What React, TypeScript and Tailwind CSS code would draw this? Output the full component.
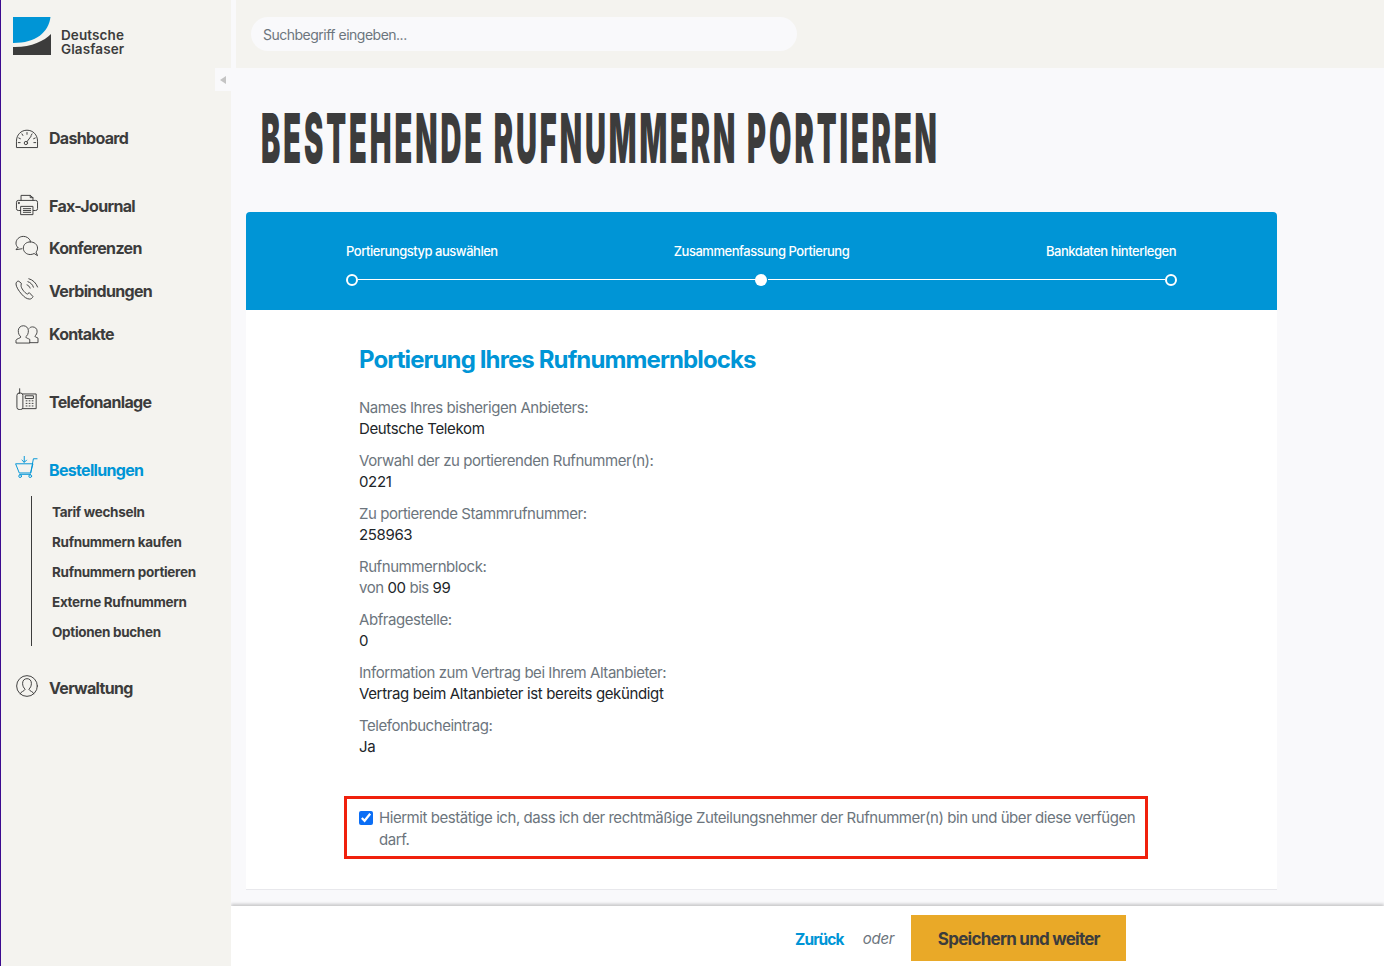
import React from "react";

const S = ({ children, c = "#3c3c3c" }: { children: React.ReactNode; c?: string }) => (
  <svg width="24" height="22" viewBox="0 0 26 24" fill="none" stroke={c} strokeWidth="1.050" strokeLinecap="round" strokeLinejoin="round">
    {children}
  </svg>
);

const Gauge = () => (
  <S>
    <path d="M1.500 22v-6.500C1.500 8.500 6.500 3.500 13 3.500s11.500 5 11.500 12V22z" />
    <path d="M13 6v2M7.500 7.500l1 1.700M18.500 7.500l-1 1.700M4 12l1.800.8M22 12l-1.800.8M3.500 17h2M20.500 17h2" />
    <circle cx="11.800" cy="17.500" r="1.800" />
    <path d="M13 16l4.500-6" />
  </S>
);
const Printer = () => (
  <S>
    <path d="M6.500 7V1.500h10l3 2.500v3" />
    <path d="M16.500 1.500V4h3" />
    <path d="M6 18H3.500a2 2 0 0 1-2-2V9a2 2 0 0 1 2-2h19a2 2 0 0 1 2 2v7a2 2 0 0 1-2 2H20" />
    <rect x="6.500" y="13.500" width="13" height="9" />
    <path d="M9 16h8M9 18h8M9 20h8" />
    <circle cx="4" cy="9.800" r=".6" fill="#3c3c3c" />
  </S>
);
const Chat = () => (
  <S>
    <path d="M3 13.500c-1.300-1.200-2-2.800-2-4.600C1 5 4.500 1.500 9 1.500c3.500 0 6.500 2 7.800 5" />
    <path d="M3 13.500L1 16l6.500-1" />
    <path d="M16.500 7.500c4.500 0 8 2.900 8 6.800 0 1.700-.6 3.200-1.700 4.300l1.700 3.900-3.700-2.300c-1.300.7-2.800 1.100-4.300 1.100-4.200 0-7.500-3-7.500-7 0-4 3.300-6.800 7.500-6.800z" />
  </S>
);
const PhoneWaves = () => (
  <S>
    <path d="M6.500 5.500L4 3.500C2.500 3 1 4.800 1 6.500c0 3 3 7.500 6 11s6 5.500 9 5.500c1.500 0 3-1.200 3.500-2.800l-4-4.200-2 1.500c-1.700-.5-3.300-2.200-4.800-4.200-1.300-1.800-2.300-3.500-2.200-5z" />
    <path d="M13 7.500c1.600.6 2.800 1.800 3.400 3.500M14 4c3 1 5 3 6 6M15 .8c4.500 1.200 8 4.700 9.500 9" />
  </S>
);
const Users = () => (
  <S>
    <g transform="translate(0,1.200) scale(1,0.9)">
      <path d="M1 22.500v-3c0-1.500 5-2.500 5.500-4-2-1.500-3-4-3-7.500 0-3.500 2.500-6 5.500-6s5.500 2.500 5.500 6c0 3.500-1 6-3 7.500.5 1.500 3 2 4.500 3v4z" />
      <path d="M15.500 5c.7-1 2-1.600 3.500-1.600 2.800 0 5 2.100 5 5.100 0 2.700-.8 4.700-2.500 6 .4 1.300 2 1.500 3.500 2.500v5.500h-9" />
    </g>
  </S>
);
const DeskPhone = () => (
  <S>
    <rect x="2" y="5.500" width="6.500" height="18" rx="2.500" />
    <path d="M5 5.500V.8" />
    <path d="M8.500 6.500h14.500v16H8.500" />
    <rect x="11.500" y="8.500" width="8.500" height="3" />
    <path d="M12 14h1M15.300 14h1M18.600 14h1M12 16.800h1M15.300 16.800h1M18.600 16.800h1M12 19.600h1M15.300 19.600h1M18.600 19.600h1" />
  </S>
);
const Cart = () => (
  <S c="#0095d6">
    <path d="M1 8.500h18.500l-2.500 10H5z" />
    <path d="M17 18.500l3-15.500h4" />
    <path d="M5 20h12" />
    <circle cx="5.500" cy="22" r="1.500" />
    <circle cx="16.500" cy="22" r="1.500" />
    <path d="M10 0v6.500M7.500 4.500l2.500 2.500 2.500-2.500" />
  </S>
);
const UserCircle = () => (
  <S>
    <circle cx="13" cy="12" r="11.300" />
    <path d="M5.500 20.500c.3-2.300 5-3 5.500-5-1.700-1.500-2.800-3.500-2.800-6.500 0-3.200 2.100-5 4.800-5s4.800 1.800 4.800 5c0 3-1.100 5-2.800 6.500.5 2 5.200 2.700 5.500 5" />
  </S>
);

const NavItem = ({ icon, label, active, cls, iconCls }: { icon: React.ReactNode; label: string; active?: boolean; cls?: string; iconCls?: string }) => (
  <div className={`flex items-center h-6 pl-[14px] ${cls ?? ""}`}>
    <span className={`w-[34px] shrink-0 flex ${iconCls ?? ""}`}>{icon}</span>
    <span className={`text-[16px] font-bold tracking-[-0.68px] ${active ? "text-[#0095d6]" : "text-[#3c3c3c]"}`}>{label}</span>
  </div>
);

const rows: [string, React.ReactNode][] = [
  ["Names Ihres bisherigen Anbieters:", "Deutsche Telekom"],
  ["Vorwahl der zu portierenden Rufnummer(n):", "0221"],
  ["Zu portierende Stammrufnummer:", "258963"],
  ["Rufnummernblock:", <><span className="text-[#6c757d] tracking-[-0.45px]">von </span>00<span className="text-[#6c757d] tracking-[-0.45px]"> bis </span>99</>],
  ["Abfragestelle:", "0"],
  ["Information zum Vertrag bei Ihrem Altanbieter:", "Vertrag beim Altanbieter ist bereits gekündigt"],
  ["Telefonbucheintrag:", "Ja"],
];

export default function App() {
  return (
    <div className="flex h-[966px] overflow-hidden bg-[#f9f9fb] font-['Inter','Liberation_Sans',sans-serif] relative">
      <aside className="w-[231px] shrink-0 bg-[#f4f3ef] border-l border-[#3b0a8f]">
        <div className="flex items-start pt-[17px] pl-[12px] h-[126px]">
          <svg width="38" height="38" viewBox="0 0 38 38" className="shrink-0">
            <path d="M0 0h37.500c-2 15-14 26-37.500 26z" fill="#0095d6" />
            <path d="M0 30c18 .5 31-6 38-13v21H0z" fill="#3c3c3c" />
          </svg>
          <div className="ml-[10px] mt-[11px] text-[13.500px] leading-[14px] font-semibold text-[#3c3c3c] tracking-[0.1px]">
            <div className="h-[14px]">Deutsche</div>
            <div className="h-[14px]">Glasfaser</div>
          </div>
        </div>
        <NavItem icon={<Gauge />} label="Dashboard" />
        <NavItem icon={<Printer />} label="Fax-Journal" cls="mt-[44px]" iconCls="mb-[3px]" />
        <NavItem icon={<Chat />} label="Konferenzen" cls="mt-[18px]" iconCls="mb-[4px]" />
        <NavItem icon={<PhoneWaves />} label="Verbindungen" cls="mt-[19px]" iconCls="mb-[5px]" />
        <NavItem icon={<Users />} label="Kontakte" cls="mt-[19px]" />
        <NavItem icon={<DeskPhone />} label="Telefonanlage" cls="mt-[44px]" iconCls="mb-[6px]" />
        <NavItem icon={<Cart />} label="Bestellungen" active cls="mt-[44px]" iconCls="mb-[6px]" />
        <div className="ml-[30px] mt-[14px] border-l border-[#3c3c3c] pl-5 pt-px h-[150px] flex flex-col">
          {["Tarif wechseln", "Rufnummern kaufen", "Rufnummern portieren", "Externe Rufnummern", "Optionen buchen"].map((t) => (
            <div key={t} className="h-[30px] shrink-0 flex items-center text-[13.500px] font-bold tracking-[-0.32px] text-[#3c3c3c]">{t}</div>
          ))}
        </div>
        <NavItem icon={<UserCircle />} label="Verwaltung" cls="mt-[30px]" iconCls="mb-[5px]" />
      </aside>
      <div className="absolute left-[215px] top-[68px] w-4 h-[23px] bg-[#f9f9fb] flex items-center justify-center">
        <span className="w-0 h-0 border-y-[4px] border-y-transparent border-r-[6px] border-r-[#c4c4c4]" />
      </div>
      <main className="flex-1 min-w-0 flex flex-col overflow-hidden">
        <div className="ml-[5px] h-[68px] shrink-0 bg-[#f4f3ef] pt-[17px] pl-[15px]">
          <div className="w-[546px] h-[34px] rounded-[17px] bg-[#f9f9fb] flex items-center pl-3 text-[14px] tracking-[-0.5px] text-[#6c757d]">Suchbegriff eingeben...</div>
        </div>
        <div className="flex-1 min-h-0 pl-[15px] overflow-hidden">
          <h1 className="h-[144px] pt-[30px] pl-[15px] whitespace-nowrap">
            <span className="inline-block origin-left scale-x-[0.42] text-[69px] leading-[80px] font-black tracking-[7px] text-[#3c3c3c]">BESTEHENDE RUFNUMMERN PORTIEREN</span>
          </h1>
          <div className="w-[1031px] bg-white border-b border-[#e8e8ec]">
            <div className="h-[98px] bg-[#0095d6] rounded-t-[4px] px-[100px] pt-[31px] text-white">
              <div className="grid grid-cols-3 text-[13px] leading-4 font-medium tracking-[-0.47px]">
                <span className="text-left">Portierungstyp auswählen</span>
                <span className="text-center">Zusammenfassung Portierung</span>
                <span className="text-right pr-px">Bankdaten hinterlegen</span>
              </div>
              <div className="mt-[15px] flex items-center">
                <span className="w-3 h-3 rounded-full border-2 border-white shrink-0" />
                <span className="flex-1 h-px mb-px bg-white" />
                <span className="w-3 h-3 rounded-full bg-white shrink-0 -ml-px mr-px" />
                <span className="flex-1 h-px mb-px bg-white" />
                <span className="w-3 h-3 rounded-full border-2 border-white shrink-0" />
              </div>
            </div>
            <div className="pl-[113px] pt-[35px] pb-[30px]">
              <h2 className="text-[24px] leading-[30px] font-bold tracking-[-0.88px] text-[#0095d6]">Portierung Ihres Rufnummernblocks</h2>
              <div className="mt-[22px] flex flex-col gap-[11px] text-[15px] leading-[21px] tracking-[-0.36px]">
                {rows.map(([l, v], i) => (
                  <div key={i}>
                    <div className="text-[#6c757d] tracking-[-0.45px]">{l}</div>
                    <div className="text-[#212529]">{v}</div>
                  </div>
                ))}
              </div>
              <div className="mt-[39px] -ml-[15px] w-[804px] h-[63px] border-[3px] border-[#f0200c] flex pl-3 pt-[8px] gap-[6px]">
                <input type="checkbox" defaultChecked className="w-[14px] h-[14px] mt-[4px] shrink-0 accent-[#0b6ef5]" />
                <p className="text-[15px] leading-[22px] tracking-[-0.45px] text-[#6c757d]">
                  Hiermit bestätige ich, dass ich der rechtmäßige Zuteilungsnehmer der Rufnummer(n) bin und über diese verfügen darf.
                </p>
              </div>
            </div>
          </div>
        </div>
        <footer className="h-[60px] shrink-0 bg-white shadow-[0_-2px_3px_rgba(0,0,0,0.2)] pt-[9px] pl-[564px] flex items-start">
          <div className="h-[46px] flex items-center">
            <span className="pt-[3px] text-[15.500px] font-bold tracking-[-0.9px] text-[#0095d6]">Zurück</span>
            <span className="pt-[3px] ml-[19px] text-[15px] italic tracking-[-0.2px] text-[#6c757d]">oder</span>
            <button className="pt-[3px] ml-[17px] w-[215px] h-[46px] bg-[#e9a928] text-[17px] font-bold tracking-[-0.75px] text-[#3c3c3c]">Speichern und weiter</button>
          </div>
        </footer>
      </main>
    </div>
  );
}
